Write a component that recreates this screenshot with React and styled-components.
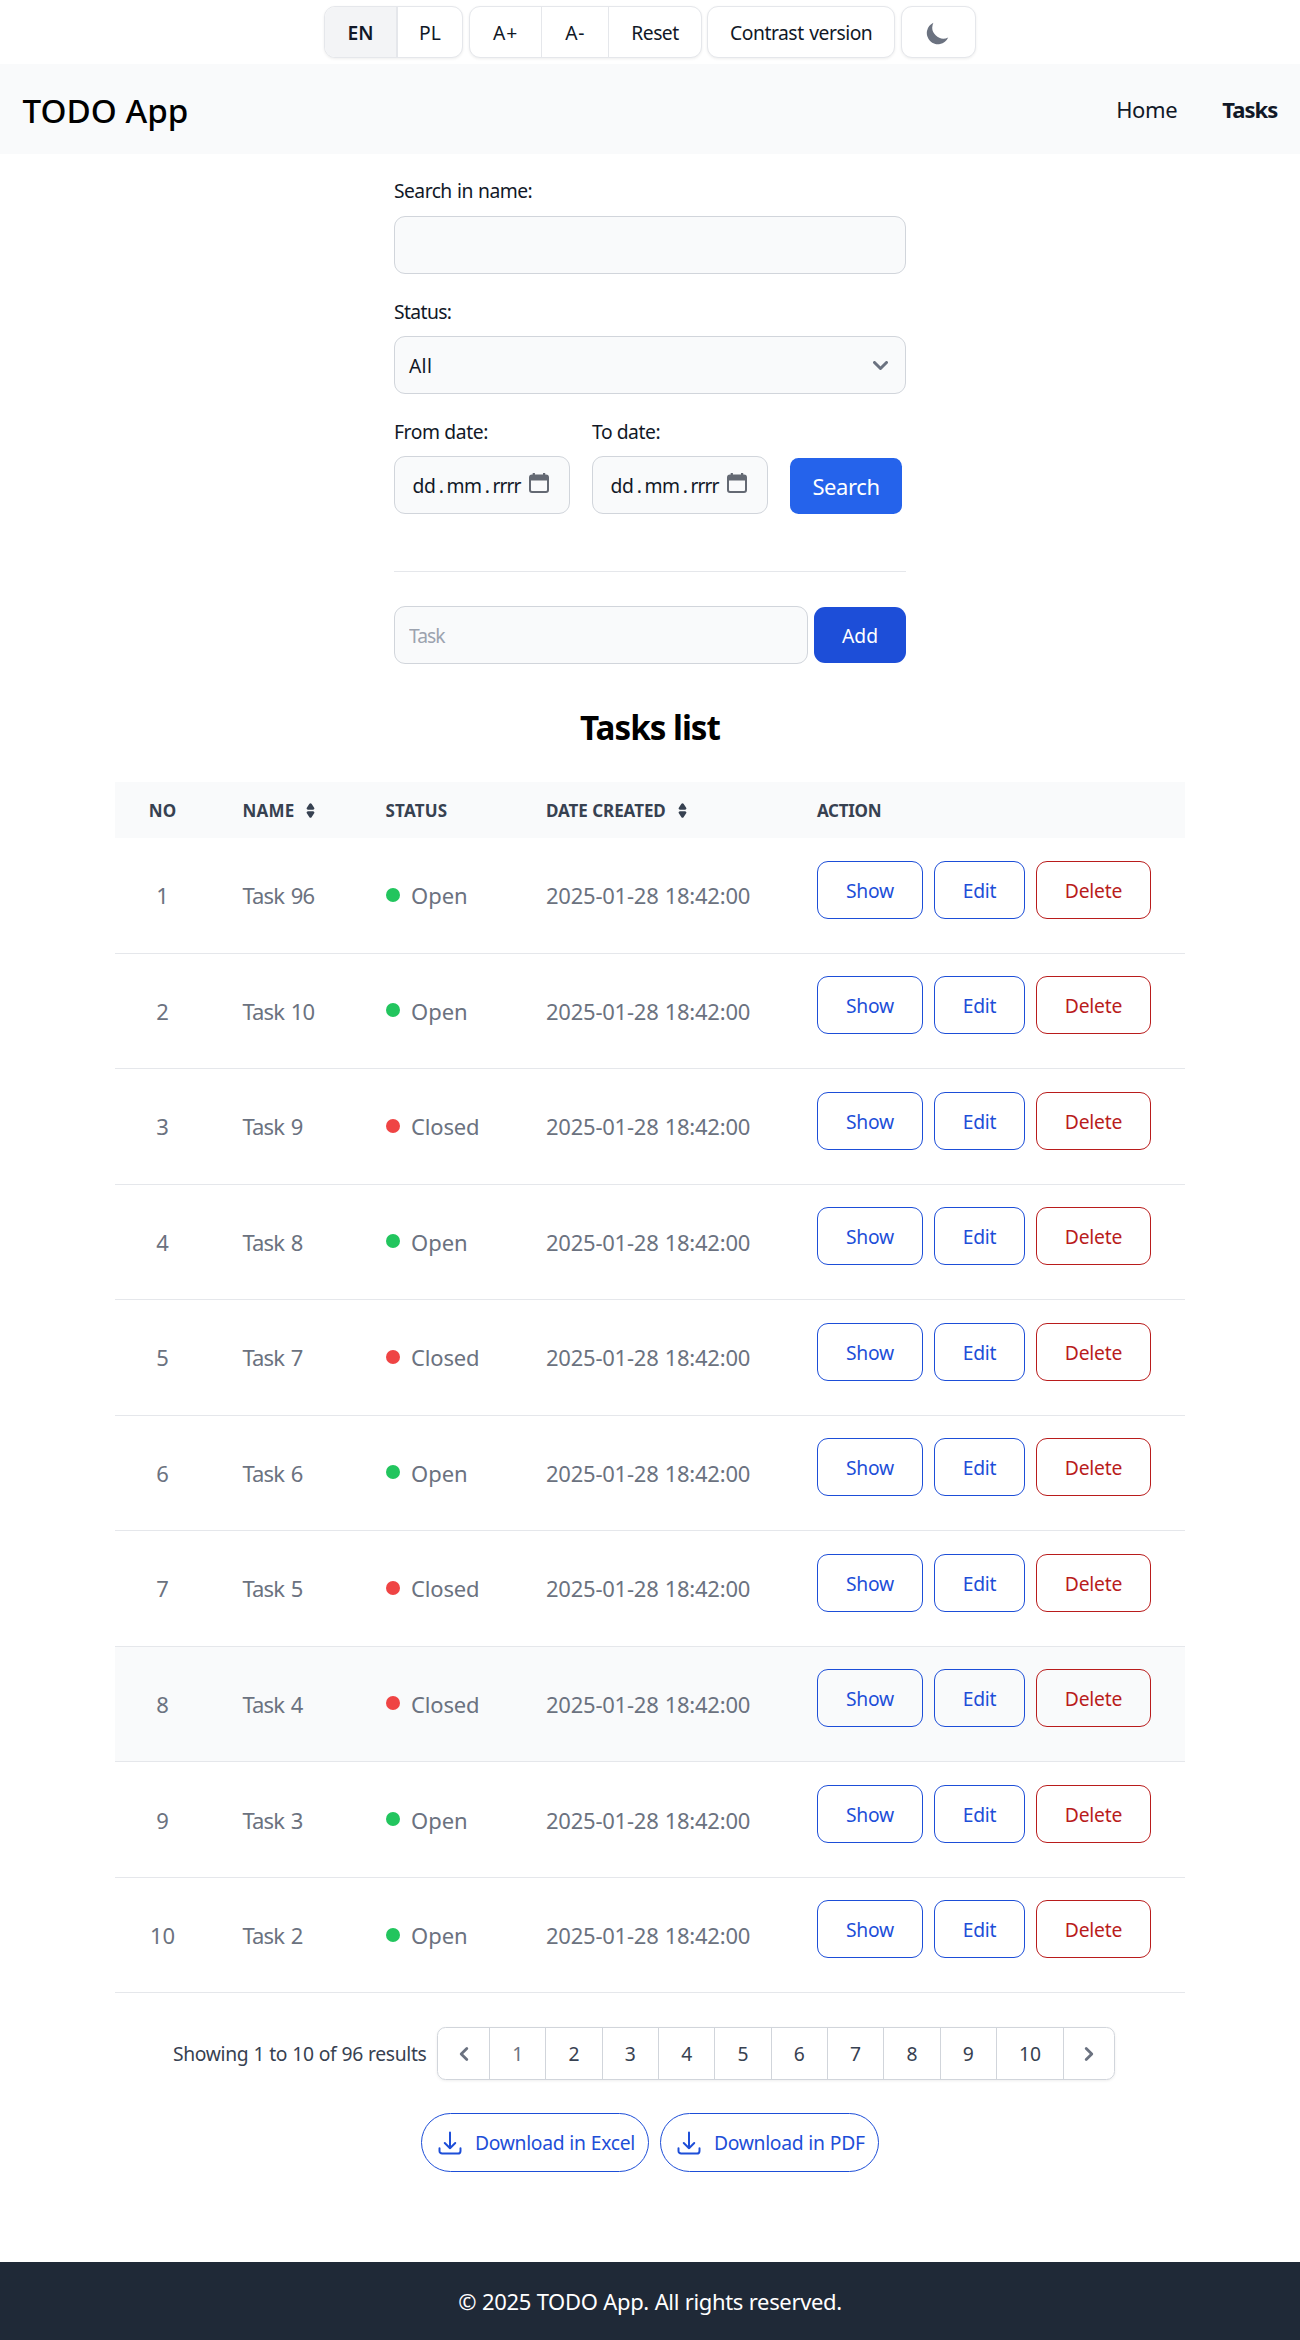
import React from "react";
import styled, { createGlobalStyle } from "styled-components";

const GlobalStyle = createGlobalStyle`
  *, *::before, *::after { box-sizing: border-box; }
  body {
    margin: 0;
    background: #fff;
    color: #111827;
    font-family: "Noto Sans", "Open Sans", sans-serif;
    font-size: 19.3px;
    line-height: 28px;
  }
  button, input, select { font: inherit; color: inherit; }
  svg { display: block; flex: none; }
`;

const Page = styled.div`
  display: flex;
  flex-direction: column;
  height: 2340px;
  overflow: hidden;
`;

const Txt = styled.span`
  letter-spacing: ${(p) => p.$ls || 0}px;
  word-spacing: ${(p) => p.$ws || 0}px;
  white-space: nowrap;
`;

/* Accessibility toolbar */
const Toolbar = styled.div`
  display: flex;
  justify-content: center;
  gap: 5.7px;
  height: 64px;
  padding-top: 6px;
`;

const ButtonGroup = styled.div`
  display: flex;
  width: ${(p) => p.$width}px;
  height: 52px;
  border: 1px solid #e5e7eb;
  border-radius: 11px;
  background: #fff;
  overflow: hidden;
  box-shadow: 0 1px 3px rgba(0, 0, 0, 0.07);
`;

const ToolButton = styled.button`
  flex: ${(p) => (p.$width ? `0 0 ${p.$width}px` : "1")};
  display: flex;
  align-items: center;
  justify-content: center;
  padding: 1px 0 0;
  border: 0;
  border-left: ${(p) => (p.$divider ? `${p.$divider}px solid #e5e7eb` : "0")};
  background: ${(p) => (p.$active ? "#f3f4f6" : "transparent")};
  font-weight: ${(p) => (p.$active ? 600 : 400)};
`;

/* Navigation */
const Header = styled.header`
  display: flex;
  align-items: center;
  justify-content: space-between;
  height: 90px;
  padding: 0 22.5px;
  background: #f9fafb;
`;

const Brand = styled.div`
  padding-top: 3px;
  color: #000;
  font-size: 33.2px;
  font-weight: 500;
  line-height: 40px;
`;

const Nav = styled.nav`
  display: flex;
  gap: 45px;
  font-size: 22px;
`;

const NavLink = styled.a`
  font-weight: ${(p) => (p.$current ? 700 : 400)};
  letter-spacing: ${(p) => (p.$current ? -0.9 : -0.4)}px;
`;

/* Search form */
const Forms = styled.div`
  display: flex;
  flex-direction: column;
  width: 512px;
  margin: 0 auto;
`;

const Field = styled.label`
  display: flex;
  flex-direction: column;
  gap: ${(p) => 34 - p.$top}px;
  padding-top: ${(p) => p.$top}px;
`;

const Control = styled.span`
  display: flex;
  align-items: center;
  width: ${(p) => (p.$width ? `${p.$width}px` : "100%")};
  height: 58px;
  padding: ${(p) => p.$pad || "1px 17px 0 14px"};
  border: 1px solid #d1d5db;
  border-radius: 11px;
  background: #f9fafb;
`;

const TextInput = styled.input`
  flex: 1;
  min-width: 0;
  padding: 0;
  border: 0;
  background: transparent;
  outline: 0;
  letter-spacing: -0.3px;
  &::placeholder { color: #9ca3af; opacity: 1; letter-spacing: -1px; }
`;

const Selected = styled.span`
  flex: 1;
  letter-spacing: 0.3px;
`;

const DateRow = styled.div`
  display: flex;
  align-items: flex-end;
  gap: 22px;
`;

const DateDot = styled.span`
  padding: 0 2.4px 0 3.4px;
`;

const DateIcon = styled.svg`
  margin: -6px 0 0 auto;
`;

const SearchButton = styled.button`
  width: 112px;
  height: 56px;
  padding: 0;
  border: 0;
  border-radius: 8.5px;
  background: #2563eb;
  color: #fff;
  font-size: 22px;
  letter-spacing: -0.4px;
`;

const Divider = styled.hr`
  width: 100%;
  height: 1px;
  margin: 57px 0 34px;
  border: 0;
  background: #e5e7eb;
`;

const AddRow = styled.div`
  display: flex;
  align-items: center;
  gap: 6px;
`;

const AddButton = styled.button`
  flex: 0 0 92px;
  height: 56px;
  padding: 2px 0 0;
  border: 0;
  border-radius: 11px;
  background: #1d4ed8;
  color: #fff;
`;

/* Table */
const Title = styled.h1`
  margin: 44px 0 34px;
  color: #000;
  font-size: 33.2px;
  font-weight: 700;
  line-height: 40px;
  letter-spacing: -1px;
  text-align: center;
`;

const Table = styled.div`
  width: 1070px;
  margin: 0 auto;
`;

const columns = "94px 143px 160.5px 271px 1fr";

const HeadRow = styled.div`
  display: grid;
  grid-template-columns: ${columns};
  align-items: center;
  height: 56px;
  padding-top: 1px;
  background: #f9fafb;
  color: #374151;
  font-size: 17px;
  font-weight: 700;
`;

const Row = styled.div`
  display: grid;
  grid-template-columns: ${columns};
  align-items: center;
  height: 115.54px;
  border-bottom: 1px solid #e5e7eb;
  background: ${(p) => (p.$hovered ? "#f9fafb" : "#fff")};
  color: #6b7280;
  font-size: 22px;
`;

const Cell = styled.div`
  display: flex;
  align-items: center;
  gap: ${(p) => p.$gap || 0}px;
  justify-content: ${(p) => (p.$center ? "center" : "flex-start")};
  padding-left: ${(p) => (p.$pad === undefined ? 33.5 : p.$pad)}px;
`;

const Dot = styled.span`
  width: 14px;
  height: 14px;
  margin: -1px 11.5px 0 0;
  border-radius: 50%;
  background: ${(p) => (p.$open ? "#22c55e" : "#ef4444")};
`;

const Actions = styled.div`
  display: flex;
  align-self: start;
  gap: 11px;
  padding: 22.7px 0 0 33.5px;
  font-size: 19.3px;
`;

const ActionButton = styled.button`
  width: ${(p) => p.$width}px;
  height: 58px;
  padding: 2px 0 0;
  border: 1px solid currentColor;
  border-radius: 11px;
  background: transparent;
  color: ${(p) => (p.$danger ? "#b91c1c" : "#1d4ed8")};
  letter-spacing: -0.2px;
`;

/* Pagination */
const Pagination = styled.div`
  display: flex;
  align-items: center;
  padding: 34px 0 0 173px;
`;

const Summary = styled.div`
  width: 264px;
  padding-top: 1px;
  color: #374151;
  letter-spacing: -0.33px;
  word-spacing: 0.4px;
  white-space: nowrap;
`;

const Pages = styled.div`
  display: flex;
  height: 53px;
  border: 1px solid #d1d5db;
  border-radius: 8.5px;
  box-shadow: 0 1px 3px rgba(0, 0, 0, 0.07);
`;

const PageLink = styled.a`
  display: flex;
  align-items: center;
  justify-content: center;
  width: ${(p) => p.$width || 56.33}px;
  padding-top: ${(p) => (p.$icon ? 0 : 1)}px;
  border-left: ${(p) => (p.$first ? "0" : "1px solid #d1d5db")};
  color: ${(p) => (p.$muted ? "#6b7280" : "#374151")};
`;

const Downloads = styled.div`
  display: flex;
  justify-content: center;
  gap: 11px;
  padding-top: 33px;
`;

const DownloadButton = styled.button`
  display: flex;
  align-items: center;
  gap: 11px;
  width: ${(p) => p.$width}px;
  height: 59px;
  padding: 0 0 0 14px;
  border: 1px solid #1d4ed8;
  border-radius: 30px;
  background: #fff;
  color: #1d4ed8;
`;

const Footer = styled.footer`
  display: flex;
  align-items: center;
  justify-content: center;
  height: 78px;
  margin-top: auto;
  background: #1f2937;
  color: #fff;
  font-size: 22px;
  letter-spacing: -0.35px;
  word-spacing: 0.4px;
`;

const MoonIcon = () => (
  <svg width="28" height="28" viewBox="0 0 20 20" fill="#6b7280">
    <path d="M17.293 13.293A8 8 0 016.707 2.707a8.001 8.001 0 1010.586 10.586z" />
  </svg>
);

const SortIcon = () => (
  <svg width="17" height="17" viewBox="0 0 24 24" fill="currentColor">
    <path d="M8.574 11.024h6.852a2.075 2.075 0 0 0 1.847-1.086 1.9 1.9 0 0 0-.11-1.986L13.736 2.9a2.122 2.122 0 0 0-3.472 0L6.837 7.952a1.9 1.9 0 0 0-.11 1.986 2.074 2.074 0 0 0 1.847 1.086Zm6.852 1.952H8.574a2.072 2.072 0 0 0-1.847 1.087 1.9 1.9 0 0 0 .11 1.985l3.426 5.05a2.123 2.123 0 0 0 3.472 0l3.427-5.05a1.9 1.9 0 0 0 .11-1.985 2.074 2.074 0 0 0-1.846-1.087Z" />
  </svg>
);

const SelectChevron = () => (
  <svg width="15" height="9" viewBox="0 0 10 6" fill="none" stroke="#6b7280" strokeWidth="2" strokeLinecap="round" strokeLinejoin="round">
    <path d="m1 1 4 4 4-4" />
  </svg>
);

const CalendarIcon = () => (
  <DateIcon width="20" height="20" viewBox="0 0 20 20">
    <rect x="1" y="2.6" width="18" height="16.4" rx="2" fill="none" stroke="#646973" strokeWidth="2" />
    <path d="M1 3.5a1.6 1.6 0 0 1 1.6-1.6h14.8A1.6 1.6 0 0 1 19 3.5V7.4H1ZM3.7 0h2.2v3H3.7ZM14 0h2.2v3H14Z" fill="#646973" />
  </DateIcon>
);

const PageChevron = ({ next }) => (
  <svg width="28" height="28" viewBox="0 0 20 20" fill="#6b7280">
    <path
      d={
        next
          ? "M7.293 14.707a1 1 0 010-1.414L10.586 10 7.293 6.707a1 1 0 011.414-1.414l4 4a1 1 0 010 1.414l-4 4a1 1 0 01-1.414 0z"
          : "M12.707 5.293a1 1 0 010 1.414L9.414 10l3.293 3.293a1 1 0 01-1.414 1.414l-4-4a1 1 0 010-1.414l4-4a1 1 0 011.414 0z"
      }
    />
  </svg>
);

const DownloadIcon = () => (
  <svg width="28" height="28" viewBox="0 0 24 24" fill="none" stroke="currentColor" strokeWidth="1.7" strokeLinecap="round" strokeLinejoin="round">
    <path d="M3 16.5v2.25A2.25 2.25 0 0 0 5.25 21h13.5A2.25 2.25 0 0 0 21 18.75V16.5M16.5 12 12 16.5m0 0L7.5 12m4.5 4.5V3" />
  </svg>
);

const DateField = ({ label, ls }) => (
  <Field $top={24}>
    <Txt $ls={ls}>{label}</Txt>
    <Control $width={176} $pad="2px 20px 0 17.5px">
      <Txt $ls={-0.4}>dd</Txt>
      <DateDot>.</DateDot>
      <Txt $ls={-0.5}>mm</Txt>
      <DateDot>.</DateDot>
      <Txt $ls={-0.9}>rrrr</Txt>
      <CalendarIcon />
    </Control>
  </Field>
);

const tasks = [
  ["Task 96", true],
  ["Task 10", true],
  ["Task 9", false],
  ["Task 8", true],
  ["Task 7", false],
  ["Task 6", true],
  ["Task 5", false],
  ["Task 4", false],
  ["Task 3", true],
  ["Task 2", true],
];

const pages = [1, 2, 3, 4, 5, 6, 7, 8, 9, 10];

export default function App() {
  return (
    <Page>
      <GlobalStyle />
      <Toolbar>
        <ButtonGroup $width={138.7}>
          <ToolButton $width={70.5} $active>EN</ToolButton>
          <ToolButton $divider={2}>PL</ToolButton>
        </ButtonGroup>
        <ButtonGroup $width={233}>
          <ToolButton $width={71.5}><Txt $ls={0.8}>A+</Txt></ToolButton>
          <ToolButton $width={67} $divider={1}><Txt $ls={0.8}>A-</Txt></ToolButton>
          <ToolButton $divider={1}><Txt $ls={-0.5}>Reset</Txt></ToolButton>
        </ButtonGroup>
        <ButtonGroup $width={187.5}>
          <ToolButton><Txt $ls={-0.47} $ws={1}>Contrast version</Txt></ToolButton>
        </ButtonGroup>
        <ButtonGroup $width={75}>
          <ToolButton aria-label="Dark mode"><MoonIcon /></ToolButton>
        </ButtonGroup>
      </Toolbar>

      <Header>
        <Brand>TODO App</Brand>
        <Nav>
          <NavLink>Home</NavLink>
          <NavLink $current>Tasks</NavLink>
        </Nav>
      </Header>

      <Forms>
        <Field $top={23}>
          <Txt $ls={-0.55} $ws={0.8}>Search in name:</Txt>
          <Control><TextInput /></Control>
        </Field>
        <Field $top={24}>
          <Txt $ls={-0.6}>Status:</Txt>
          <Control>
            <Selected>All</Selected>
            <SelectChevron />
          </Control>
        </Field>
        <DateRow>
          <DateField label="From date:" ls={-0.4} />
          <DateField label="To date:" ls={-0.45} />
          <SearchButton>Search</SearchButton>
        </DateRow>
        <Divider />
        <AddRow>
          <Control $pad="2px 17px 0 14px"><TextInput placeholder="Task" /></Control>
          <AddButton>Add</AddButton>
        </AddRow>
      </Forms>

      <Title>Tasks list</Title>

      <Table>
        <HeadRow>
          <Cell $pad={1} $center><Txt $ls={0.2}>NO</Txt></Cell>
          <Cell $gap={8}><Txt $ls={0.2}>NAME</Txt><SortIcon /></Cell>
          <Cell><Txt $ls={0.2}>STATUS</Txt></Cell>
          <Cell $gap={8}><Txt $ls={-0.05}>DATE CREATED</Txt><SortIcon /></Cell>
          <Cell><Txt $ls={-0.3}>ACTION</Txt></Cell>
        </HeadRow>
        {tasks.map(([name, open], i) => (
          <Row key={name} $hovered={i === 7}>
            <Cell $pad={1} $center>{i + 1}</Cell>
            <Cell><Txt $ls={-0.9} $ws={2}>{name}</Txt></Cell>
            <Cell>
              <Dot $open={open} />
              <Txt $ls={open ? 0 : -0.15}>{open ? "Open" : "Closed"}</Txt>
            </Cell>
            <Cell><Txt $ls={-0.23} $ws={0.6}>2025-01-28 18:42:00</Txt></Cell>
            <Actions>
              <ActionButton $width={106}>Show</ActionButton>
              <ActionButton $width={91}>Edit</ActionButton>
              <ActionButton $width={115} $danger>Delete</ActionButton>
            </Actions>
          </Row>
        ))}
      </Table>

      <Pagination>
        <Summary>Showing 1 to 10 of 96 results</Summary>
        <Pages>
          <PageLink $first $icon $width={51}><PageChevron /></PageLink>
          {pages.map((n) => (
            <PageLink key={n} $muted={n === 1} $width={n === 10 ? 67 : undefined}>{n}</PageLink>
          ))}
          <PageLink $icon $width={51}><PageChevron next /></PageLink>
        </Pages>
      </Pagination>

      <Downloads>
        <DownloadButton $width={228}><DownloadIcon /><Txt $ls={-0.32} $ws={0.5}>Download in Excel</Txt></DownloadButton>
        <DownloadButton $width={219}><DownloadIcon /><Txt $ls={-0.32} $ws={0.5}>Download in PDF</Txt></DownloadButton>
      </Downloads>

      <Footer>© 2025 TODO App. All rights reserved.</Footer>
    </Page>
  );
}
